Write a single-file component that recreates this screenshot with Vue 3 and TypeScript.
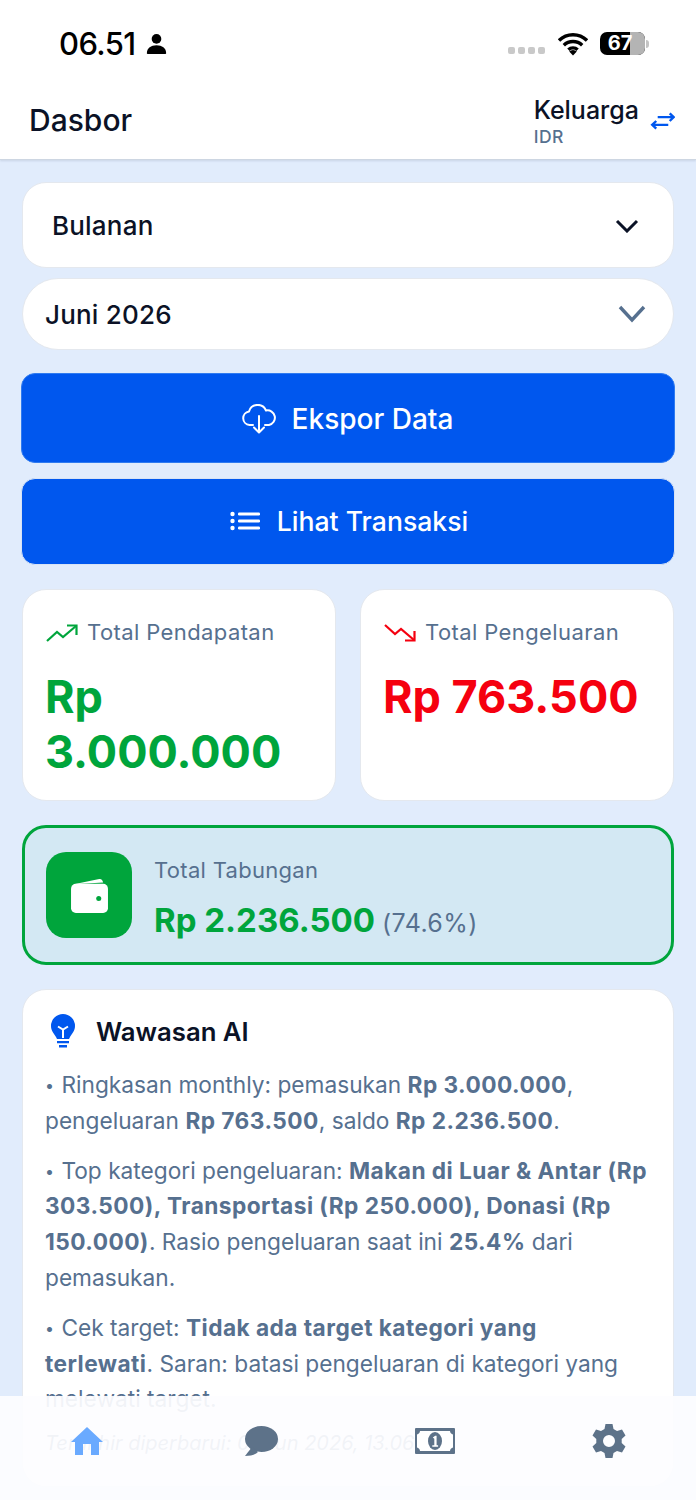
<template>
  <div class="screen">
    <header class="top">
      <div class="status">
        <div class="status-left">
          <span class="time">06.51</span>
          <svg class="person" viewBox="0 0 20 20" width="21" height="21"><circle cx="10" cy="5.6" r="4.6" fill="#000" /><path d="M.8 19.2c0-5 4-7.6 9.2-7.6s9.200 2.600 9.200 7.600c0 .5-.3.8-.8.8H1.600c-.5 0-.8-.3-.8-.8z" fill="#000" /></svg>
        </div>
        <div class="status-right">
          <div class="dots"><i></i><i></i><i></i><i></i></div>
          <svg class="wifi" viewBox="0 0 30 24" width="30" height="24"><path d="M1 8.500a20 20 0 0 1 28 0M5.800 13.300a13.200 13.200 0 0 1 18.400 0M10.400 17.700a6.600 6.600 0 0 1 9.200 0" fill="none" stroke="#000" stroke-width="3.400" /><path d="M15 23.500l-3.800-3.900a5.400 5.400 0 0 1 7.600 0z" fill="#000" /></svg>
          <div class="battery"><div class="battery-fill"></div><span>67</span></div>
          <div class="battery-tip"></div>
        </div>
      </div>
      <div class="titlebar">
        <h1>Dasbor</h1>
        <div class="account">
          <div class="account-text">
            <div class="account-name">Keluarga</div>
            <div class="account-cur">IDR</div>
          </div>
          <svg class="swap" viewBox="0 0 26 18" width="25" height="18" fill="none" stroke="#0057ee" stroke-width="2.500"><path d="M8 5h17M20.500 1l4.200 4-4.200 4" /><path d="M19 13H2M6.500 9l-4.200 4 4.200 4" /></svg>
        </div>
      </div>
    </header>

    <main class="content">
      <div class="select select-top">
        <span>Bulanan</span>
        <svg viewBox="0 0 24 14" width="24" height="14" fill="none" stroke="#0b1226" stroke-width="3"><path d="M2 2l10 10L22 2" /></svg>
      </div>
      <div class="select select-date">
        <span>Juni 2026</span>
        <svg viewBox="0 0 28 18" width="28" height="18" fill="none" stroke="#56708f" stroke-width="3.400"><path d="M2 2l12 13L26 2" /></svg>
      </div>

      <button class="action export">
        <svg viewBox="0 0 36 30" width="36" height="30" fill="none" stroke="#fff" stroke-width="2" stroke-linecap="round" stroke-linejoin="round"><path d="M12 21H8.500A6.800 6.800 0 0 1 8 7.500 9 9 0 0 1 25 6.500 7.300 7.300 0 0 1 28 21h-4" /><path d="M18 12v16M13 23.500l5 5 5-5" /></svg>
        Ekspor Data
      </button>
      <button class="action list">
        <svg viewBox="0 0 30 20" width="30" height="20" fill="#fff"><circle cx="2.500" cy="3" r="2.200" /><circle cx="2.500" cy="10" r="2.200" /><circle cx="2.500" cy="17" r="2.200" /><rect x="8" y="1.500" width="22" height="3" rx="1.200" /><rect x="8" y="8.500" width="22" height="3" rx="1.200" /><rect x="8" y="15.500" width="22" height="3" rx="1.200" /></svg>
        Lihat Transaksi
      </button>

      <div class="totals">
        <div class="card total">
          <div class="total-label">
            <svg viewBox="0 0 32 20" width="32" height="20" fill="none" stroke="#00a53c" stroke-width="2.200"><path d="M1 18l10-9 6 5L30 3" /><path d="M21 2.500h9.500V12" /></svg>
            Total Pendapatan
          </div>
          <div class="total-value income">Rp 3.000.000</div>
        </div>
        <div class="card total">
          <div class="total-label">
            <svg viewBox="0 0 32 20" width="32" height="20" fill="none" stroke="#f5000f" stroke-width="2.200"><path d="M1 2l10 9 6-5 13 11" /><path d="M21 17.500h9.500V8" /></svg>
            Total Pengeluaran
          </div>
          <div class="total-value expense">Rp 763.500</div>
        </div>
      </div>

      <div class="savings">
        <div class="wallet">
          <svg viewBox="0 0 38 36" width="37" height="35"><path d="M3 6.500 29 1c2-.4 3.500.8 4 3.500z" fill="#fff" /><rect x="0" y="6" width="38" height="30" rx="5" fill="#fff" /><circle cx="28.500" cy="21" r="2.600" fill="#00a53c" /></svg>
        </div>
        <div class="savings-text">
          <div class="savings-label">Total Tabungan</div>
          <div class="savings-value"><b>Rp 2.236.500</b> <span>(74.6%)</span></div>
        </div>
      </div>

      <div class="card insights">
        <div class="insights-head">
          <svg viewBox="0 0 24 34" width="24" height="34"><path d="M12 0a12 12 0 0 0-12 12c0 5 3 7.500 5 11 .5 1 .8 1.500 1 2h12c.2-.5.500-1 1-2 2-3.500 5-6 5-11A12 12 0 0 0 12 0z" fill="#0057ee" /><path d="M7 12.500l5 3 5-3M12 15.500V24" fill="none" stroke="#fff" stroke-width="2" /><path d="M6 27h12v2.200H6zM8 31h8v2.400H8z" fill="#0057ee" /></svg>
          <h2>Wawasan AI</h2>
        </div>
        <p><span class="dot">•</span> Ringkasan monthly: pemasukan <b>Rp 3.000.000</b>, pengeluaran <b>Rp 763.500</b>, saldo <b>Rp 2.236.500</b>.</p>
        <p><span class="dot">•</span> Top kategori pengeluaran: <b>Makan di Luar &amp; Antar (Rp 303.500), Transportasi (Rp 250.000), Donasi (Rp 150.000)</b>. Rasio pengeluaran saat ini <b>25.4%</b> dari pemasukan.</p>
        <p><span class="dot">•</span> Cek target: <b>Tidak ada target kategori yang terlewati</b>. Saran: batasi pengeluaran di kategori yang melewati target.</p>
        <p class="updated">Terakhir diperbarui: 01 Jun 2026, 13.06</p>
      </div>
    </main>

    <nav class="tabs">
      <svg viewBox="0 0 32 28" width="32" height="28"><path d="M16 0 32 15h-4v13h-8V17h-8v11H4V15H0z" fill="#6aaaff" /></svg>
      <svg viewBox="0 0 34 30" width="34" height="30"><ellipse cx="17.500" cy="13" rx="16.500" ry="13" fill="#5d7289" /><path d="M8 21 1 30c5 0 10-1 13-4z" fill="#5d7289" /></svg>
      <svg viewBox="0 0 40 26" width="40" height="26">
        <rect width="40" height="26" rx="1" fill="#5d7289" />
        <path d="M5 3h30c0 2 1.500 3 3 3.500v13c-1.500.5-3 1.500-3 3.500H5c0-2-1.500-3-3-3.500v-13C3.500 6 5 5 5 3z" fill="#fff" />
        <ellipse cx="20" cy="13" rx="7" ry="9" fill="#5d7289" />
        <path d="M17.800 9.500l2.400-1.700h1.400v9.400h1.500v1.600h-5.800v-1.600h2V10.800z" fill="#fff" />
      </svg>
      <svg viewBox="0 0 34 34" width="34" height="34"><path fill-rule="evenodd" d="M13.500 0h7l1 5 3.500 2 5-1.500 3.500 6-3.800 3.400v4.200l3.800 3.400-3.500 6-5-1.500-3.500 2-1 5h-7l-1-5-3.500-2-5 1.500-3.500-6 3.800-3.400v-4.200L.5 11.500l3.500-6L9 7l3.500-2zM17 11a6 6 0 1 0 0 12 6 6 0 0 0 0-12z" fill="#5d7289" /></svg>
    </nav>
  </div>
</template>

<script setup lang="ts">
</script>

<style>
body {
  background: #e1ecfc;
}
</style>

<style scoped>
.screen {
  position: relative;
  width: 696px;
  height: 1500px;
  overflow: hidden;
  background: #e1ecfc;
  font-family: Inter, "Liberation Sans", sans-serif;
  color: #0b1226;
}

.top {
  background: #fff;
  border-bottom: 1px solid #cdd6e2;
  box-shadow: 0 1px 2px rgba(60, 80, 110, 0.15);
  height: 160px;
  box-sizing: border-box;
}

.status {
  display: flex;
  justify-content: space-between;
  align-items: center;
  height: 87px;
  padding: 0 47px 0 59px;
}

.status-left {
  display: flex;
  align-items: center;
  gap: 10px;
}

.time {
  font-size: 31px;
  font-weight: 500;
  color: #000;
  letter-spacing: -0.6px;
}

.status-right {
  display: flex;
  align-items: center;
}

.dots {
  display: flex;
  gap: 3px;
  margin: 13px 13px 0 0;
}

.dots i {
  width: 7px;
  height: 7px;
  border-radius: 2px;
  background: #c9c9c9;
}

.wifi {
  margin-right: 12px;
}

.battery {
  position: relative;
  width: 45px;
  height: 23px;
  border-radius: 7px;
  overflow: hidden;
  background: #000;
}

.battery-fill {
  position: absolute;
  top: 0;
  right: 0;
  bottom: 0;
  width: 15px;
  background: #b4b4b4;
}

.battery span {
  position: absolute;
  left: 5px;
  top: 0;
  width: 30px;
  text-align: center;
  font-size: 20px;
  line-height: 23px;
  font-weight: 700;
  color: #fff;
}

.battery-tip {
  width: 3px;
  height: 8px;
  margin-left: 1px;
  border-radius: 0 3px 3px 0;
  background: #c4c4c4;
}

.titlebar {
  display: flex;
  justify-content: space-between;
  align-items: center;
  height: 72px;
  padding: 0 21px 0 29px;
}

h1 {
  margin: 0 0 6px;
  font-size: 30px;
  font-weight: 500;
  color: #0b1226;
}

.account {
  display: flex;
  align-items: center;
  gap: 11px;
}

.account-text {
  margin-bottom: 2px;
}

.swap {
  margin-bottom: 4px;
}

.account-name {
  font-size: 25px;
  line-height: 29px;
  font-weight: 500;
}

.account-cur {
  font-size: 17.500px;
  line-height: 23px;
  font-weight: 500;
  letter-spacing: 0.5px;
  color: #56708f;
}

.content {
  display: flex;
  flex-direction: column;
  padding: 22px 22px 0;
}

.select,
.card {
  background: #fff;
  border: 1px solid #e4e8ee;
  box-sizing: border-box;
}

.select {
  display: flex;
  justify-content: space-between;
  align-items: center;
  font-size: 26px;
  font-weight: 500;
  letter-spacing: 0.2px;
}

.select-top {
  height: 86px;
  border-radius: 24px;
  padding: 1px 34px 0 29px;
}

.select-date {
  height: 72px;
  margin-top: 10px;
  border-radius: 36px;
  padding: 0 27px 0 22px;
}

.action {
  display: flex;
  justify-content: center;
  align-items: center;
  gap: 15px;
  width: calc(100% + 2px);
  margin-left: -1px;
  border: 1px solid #2f7bf0;
  border-radius: 14px;
  background: #0057ee;
  color: #fff;
  font-family: inherit;
  font-weight: 500;
  padding: 0;
}

.export {
  height: 90px;
  margin-top: 23px;
  padding: 2px 2px 0 0;
  font-size: 28px;
}

.list {
  height: 87px;
  margin-top: 15px;
  padding: 0 0 2px 2px;
  gap: 17px;
  border-color: #d7e3f5;
  font-size: 26.600px;
}

.totals {
  display: grid;
  grid-template-columns: 314px 314px;
  gap: 24px;
  margin-top: 24px;
}

.card {
  border-radius: 24px;
}

.total {
  height: 212px;
  padding: 29px 22px 0;
}

.total-label {
  display: flex;
  align-items: center;
  gap: 9px;
  font-size: 22px;
  line-height: 27px;
  letter-spacing: 0.4px;
  color: #56708f;
}

.total-label svg {
  margin-left: 1px;
}

.total-value {
  margin-top: 23px;
  font-size: 45px;
  line-height: 55px;
  font-weight: 700;
}

.income {
  color: #00a53c;
}

.expense {
  color: #f5000f;
}

.savings {
  display: flex;
  align-items: center;
  gap: 22px;
  height: 140px;
  margin-top: 24px;
  padding: 0 21px;
  box-sizing: border-box;
  border: 3px solid #00a53c;
  border-radius: 24px;
  background: #d3e8f3;
}

.wallet {
  display: flex;
  justify-content: center;
  align-items: center;
  width: 86px;
  height: 86px;
  border-radius: 20px;
  background: #00a53c;
}

.savings-text {
  margin-top: 10px;
}

.savings-label {
  font-size: 22px;
  line-height: 27px;
  letter-spacing: 0.3px;
  color: #56708f;
}

.savings-value {
  margin-top: 16px;
  font-size: 25px;
  line-height: 40px;
  color: #56708f;
}

.savings-value span {
  letter-spacing: 0.4px;
}

.savings-value b {
  font-size: 33px;
  font-weight: 700;
  color: #00a53c;
}

.insights {
  height: 498px;
  margin-top: 24px;
  padding: 24px 23px 0 22px;
}

.insights-head {
  display: flex;
  align-items: center;
  gap: 21px;
  margin: 0 0 19px 6px;
}

h2 {
  margin: 0;
  font-size: 25.700px;
  font-weight: 600;
}

.insights p {
  margin: 0 0 14.300px;
  font-size: 22.700px;
  line-height: 35.700px;
  color: #56708f;
}

.insights b {
  font-size: 22.700px;
  font-weight: 700;
  letter-spacing: 0.45px;
}

.dot {
  font-size: 16px;
  line-height: 0;
  vertical-align: 2px;
  letter-spacing: 1px;
}

.insights .updated {
  margin-top: -5px;
  font-size: 20px;
  font-style: italic;
}

.tabs {
  position: absolute;
  left: 0;
  right: 0;
  top: 1396px;
  height: 104px;
  display: grid;
  grid-template-columns: repeat(4, 174px);
  grid-template-rows: 34px;
  justify-items: center;
  align-items: center;
  padding-top: 28px;
  box-sizing: border-box;
  background: rgba(253, 253, 255, 0.93);
}
</style>
